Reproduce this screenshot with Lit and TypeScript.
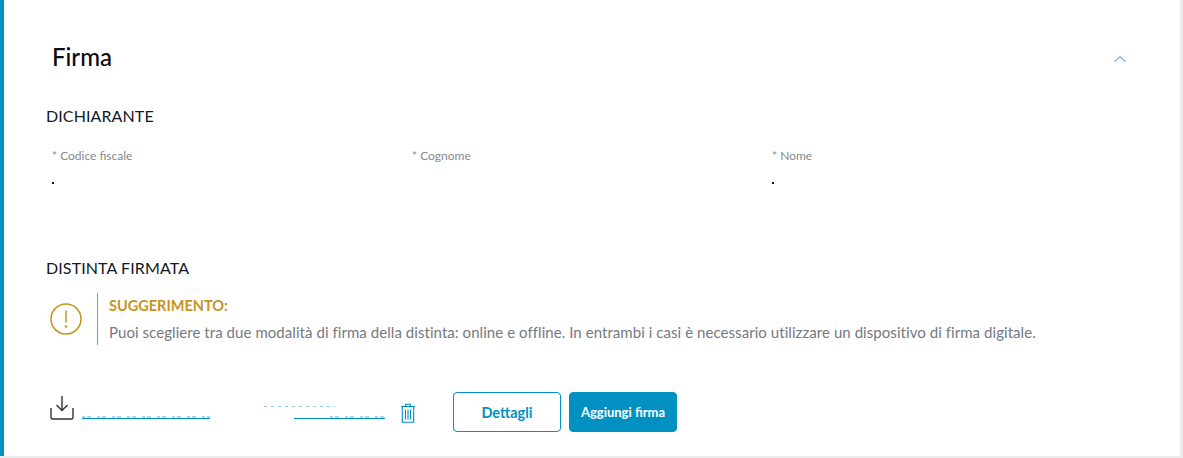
import { LitElement, html, css } from 'lit';
import { customElement } from 'lit/decorators.js';

@customElement('app-root')
export class AppRoot extends LitElement {
  static styles = css`
    :host {
      display: block;
      height: 458px;
      background: #ebebeb;
      font-family: Lato, 'Noto Sans', sans-serif;
      overflow: hidden;
    }
    .card {
      box-sizing: border-box;
      width: 1180px;
      height: 456px;
      background: #fff;
      border-left: 4px solid #0090c1;
      padding: 41px 0 0 42px;
    }
    .head {
      display: flex;
      justify-content: space-between;
      align-items: center;
      height: 30px;
      padding: 0 54px 0 6px;
    }
    h2 {
      margin: 0;
      font-size: 24px;
      font-weight: 500;
      color: #0a0a14;
    }
    .chevron {
      width: 12px;
      height: 6px;
      margin-top: 5px;
      display: block;
    }
    h3 {
      margin: 0;
      font-size: 16px;
      letter-spacing: 0.1px;
      line-height: 20px;
      font-weight: 400;
      color: #111827;
    }
    .declarant {
      margin-top: 35px;
    }
    .fields {
      display: grid;
      grid-template-columns: repeat(3, 360px);
      margin-top: 22px;
      padding-left: 6px;
      height: 60px;
    }
    .field label {
      display: block;
      font-size: 12px;
      line-height: 16px;
      color: #85898f;
    }
    .tick {
      display: block;
      width: 2px;
      height: 2px;
      margin-top: 18px;
      background: #10103a;
    }
    .signed {
      margin-top: 50px;
    }
    .notice {
      display: flex;
      align-items: stretch;
      margin: 15px 0 0 4px;
      height: 52px;
    }
    .notice svg {
      width: 32px;
      height: 32px;
      align-self: center;
      margin-right: 15px;
    }
    .notice-text {
      border-left: 1px solid #c8921e;
      padding: 1px 0 0 11px;
    }
    .notice-title {
      font-size: 14.5px;
      font-weight: 700;
      line-height: 24px;
      color: #c8921e;
    }
    .notice-body {
      margin-top: 2px;
      font-size: 15px;
      letter-spacing: 0.06px;
      line-height: 24px;
      color: #75797f;
    }
    .files {
      display: flex;
      align-items: center;
      margin: 47px 0 0 4px;
      height: 40px;
    }
    .dl {
      width: 24px;
      height: 28px;
      margin: -6px 8px 0 0;
    }
    /* the file names are blanked out in the reference, only scraps stay above the underline */
    .link {
      display: block;
      height: 6px;
      margin-top: 7px;
      border-bottom: 1px solid #0090c1;
      background: repeating-linear-gradient(
          90deg,
          #a9d7e9 0 3px,
          transparent 3px 5px,
          #a9d7e9 5px 9px,
          transparent 9px 15px
        )
        bottom no-repeat;
      background-size: 100% 2px;
    }
    .link.a {
      width: 128px;
    }
    .link.b {
      width: 91px;
      background-position: right bottom;
      background-size: 55px 2px;
    }
    .marks {
      width: 71px;
      height: 1px;
      margin: 0 -41px 11px 54px;
      background: repeating-linear-gradient(90deg, #8ccbe2 0 3px, transparent 3px 7px);
    }
    .trash {
      width: 16px;
      height: 20px;
      margin: 2px 37px 0 15px;
    }
    button {
      box-sizing: border-box;
      width: 108px;
      height: 40px;
      border-radius: 4px;
      border: 1px solid #0090c1;
      font: 700 14.5px Lato, 'Noto Sans', sans-serif;
      cursor: pointer;
    }
    .secondary {
      background: #fff;
      color: #0090c1;
      margin-right: 8px;
    }
    .primary {
      background: #0090c1;
      color: #fff;
      font-size: 13px;
    }
  `;

  render() {
    return html`
      <div class="card">
        <div class="head">
          <h2>Firma</h2>
          <svg class="chevron" viewBox="0 0 12 6" fill="none" stroke="#78aee8" stroke-width="1.2">
            <path d="M0.5 5.7 6 0.7l5.5 5" />
          </svg>
        </div>

        <h3 class="declarant">DICHIARANTE</h3>
        <div class="fields">
          <div class="field"><label>* Codice fiscale</label><span class="tick"></span></div>
          <div class="field"><label>* Cognome</label></div>
          <div class="field"><label>* Nome</label><span class="tick"></span></div>
        </div>

        <h3 class="signed">DISTINTA FIRMATA</h3>
        <div class="notice">
          <svg viewBox="0 0 32 32" fill="none" stroke="#c8921e" stroke-width="1.5">
            <circle cx="16" cy="16" r="15" />
            <path d="M16 7.5v12" />
            <circle cx="16" cy="23.5" r="0.6" fill="#c8921e" />
          </svg>
          <div class="notice-text">
            <div class="notice-title">SUGGERIMENTO:</div>
            <div class="notice-body">
              Puoi scegliere tra due modalità di firma della distinta: online e offline. In entrambi i casi è necessario utilizzare un dispositivo di firma digitale.
            </div>
          </div>
        </div>

        <div class="files">
          <svg class="dl" viewBox="0 0 24 28" fill="none" stroke="#333" stroke-width="1.4">
            <path d="M1 13v9.500a1.500 1.500 0 0 0 1.500 1.500h19a1.500 1.500 0 0 0 1.500-1.500V13" />
            <path d="M12 1v14.500M6.500 10l5.500 5.500 5.500-5.500" />
          </svg>
          <a class="link a"></a>
          <span class="marks"></span>
          <a class="link b"></a>
          <svg class="trash" viewBox="0 0 16 20" fill="none" stroke="#0090c1" stroke-width="1.1">
            <path d="M1 3.500h14M5.500 3.500V1.200h5v2.300M2.300 3.500v15.700h11.400V3.500M5.500 6.500v10M8 6.500v10M10.500 6.500v10" />
          </svg>
          <button class="secondary">Dettagli</button>
          <button class="primary">Aggiungi firma</button>
        </div>
      </div>
    `;
  }
}
